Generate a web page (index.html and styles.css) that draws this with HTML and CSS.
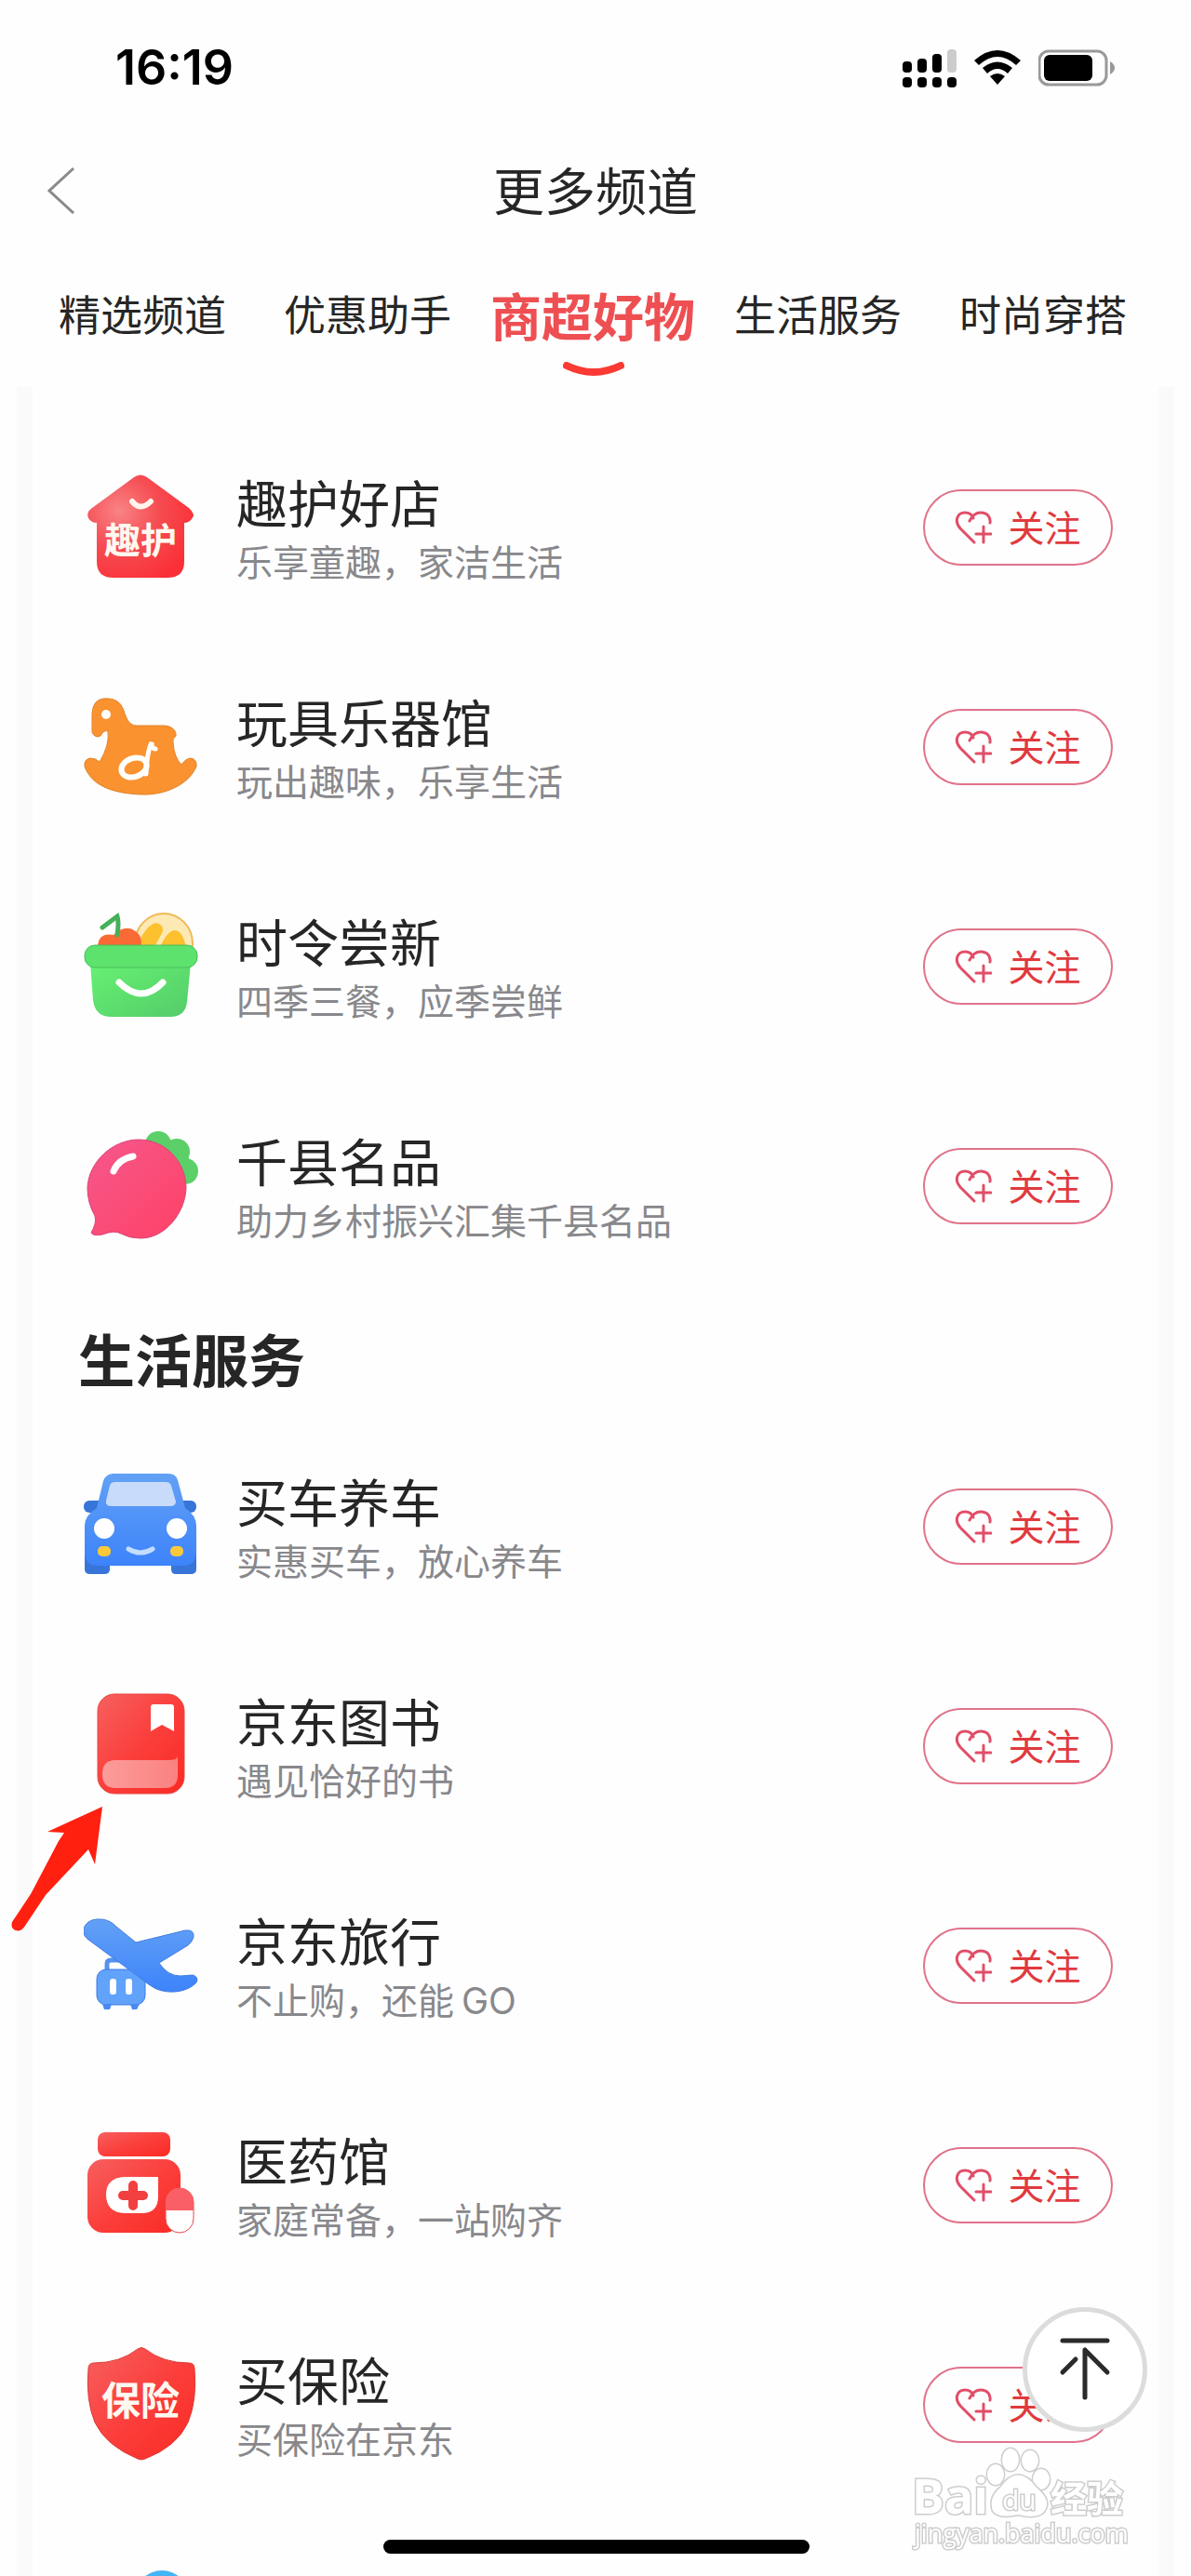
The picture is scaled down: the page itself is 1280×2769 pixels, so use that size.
FILE: index.html
```html
<!DOCTYPE html>
<html lang="zh-CN">
<head>
<meta charset="utf-8">
<meta name="viewport" content="width=device-width, initial-scale=1">
<title>更多频道</title>
<link rel="stylesheet" href="styles.css">
</head>
<body>
<svg class="defs" aria-hidden="true">
  <defs>
    <linearGradient id="red" x1="0" y1="0" x2="1" y2="1"><stop offset="0" stop-color="#f6605f"/><stop offset=".5" stop-color="#fb3f3c"/><stop offset="1" stop-color="#fa2a24"/></linearGradient>
    <radialGradient id="house" cx=".3" cy=".35" r=".75"><stop offset="0" stop-color="#f98385"/><stop offset=".5" stop-color="#f54c52"/><stop offset="1" stop-color="#fb3037"/></radialGradient>
    <linearGradient id="green" x1="0" y1="0" x2="1" y2="1"><stop offset="0" stop-color="#66f273"/><stop offset="1" stop-color="#54cb69"/></linearGradient>
    <linearGradient id="blue" x1="0" y1="0" x2="0" y2="1"><stop offset="0" stop-color="#62a1f5"/><stop offset="1" stop-color="#3d83fb"/></linearGradient>
    <linearGradient id="pink" x1="0" y1="0" x2="1" y2="1"><stop offset="0" stop-color="#f5588c"/><stop offset="1" stop-color="#ff4166"/></linearGradient>
    <linearGradient id="page" x1="0" y1="0" x2="1" y2="0"><stop offset="0" stop-color="#fc9c9a"/><stop offset="1" stop-color="#fa8280"/></linearGradient>
    <symbol id="follow" viewBox="0 0 40 38">
      <path d="M21 35 6 20C-1 12 3 3 11 3c5 0 8 3 9 6M16 12C19 6 24 3 28 3c7 0 11 5 10 11" />
      <path d="M31 18v17M23 26h16"/>
    </symbol>
  </defs>
</svg>

<div class="app">
  <header class="status">
    <span class="clock">16:19</span>
    <span class="indicators">
      <svg width="58" height="41" viewBox="0 0 58 41" aria-hidden="true"><rect x="0" y="13" width="10" height="12" rx="4"/><rect x="16" y="10" width="10" height="15" rx="4"/><rect x="32" y="5" width="10" height="20" rx="4"/><rect x="48" y="0" width="10" height="25" rx="4" fill="#ccc"/><rect x="0" y="30" width="10" height="11" rx="4"/><rect x="16" y="30" width="10" height="11" rx="4"/><rect x="32" y="30" width="10" height="11" rx="4"/><rect x="48" y="30" width="10" height="11" rx="4"/></svg>
      <svg width="50" height="38" viewBox="0 0 50 38" aria-hidden="true"><path d="M0 11Q25-11 50 11l-5 5Q25-2 5 16zM9 19Q25 6 41 19l-5 6Q25 15 14 25zM17 28Q25 22 33 28L25 37z"/></svg>
      <svg width="82" height="40" viewBox="0 0 82 40" aria-hidden="true"><rect x="1" y="2" width="72" height="36" rx="10" fill="none" stroke="#999" stroke-width="3"/><rect x="6" y="6" width="52" height="28" rx="6"/><path d="M77 13q5 3 5 7t-5 7z" fill="#999"/></svg>
    </span>
  </header>

  <div class="titlebar">
    <button class="back" aria-label="返回"><svg width="30" height="50" viewBox="0 0 30 50"><path d="M28 1 2 25 28 49" fill="none" stroke="#8a8a8a" stroke-width="3"/></svg></button>
    <h1>更多频道</h1>
  </div>

  <nav class="tabs">
    <a href="#jx">精选频道</a>
    <a href="#yh">优惠助手</a>
    <a href="#sc" class="active" aria-current="true">商超好物<svg class="smile" width="66" height="16" viewBox="0 0 66 16" aria-hidden="true"><path d="M4 4Q33 18 62 4" fill="none" stroke="#fb3a34" stroke-width="8" stroke-linecap="round"/></svg></a>
    <a href="#life">生活服务</a>
    <a href="#ss">时尚穿搭</a>
  </nav>

  <main class="panel">
    <ul class="rows" id="sc">
      <li class="row">
        <svg class="icon" viewBox="0 0 124 124" aria-hidden="true"><path d="M54 8q7-5 14 0L113 41q8 7 3 12-3 4-8 4v42q0 17-18 17H32q-18 0-18-17V57q-6 0-9-5-3-6 4-11z" fill="url(#house)"/><path d="M52 34q9 11 20 0" fill="none" stroke="#fff5ec" stroke-width="6" stroke-linecap="round"/><text x="61" y="90" class="badge" font-size="39">趣护</text></svg>
        <div class="text"><h3>趣护好店</h3><p>乐享童趣，家洁生活</p></div>
        <button class="follow"><svg><use href="#follow"/></svg><span>关注</span></button>
      </li>
      <li class="row">
        <svg class="icon" viewBox="0 0 124 124" aria-hidden="true"><path d="M21 10C34 9 40 14 43 23C46 32 49 39 57 39H86C94 39 100 44 99 50Q95 53 96 57Q97 73 105 81Q110 74 115 74Q122 75 121 83C113 102 88 114 62 113C34 112 9 105 1 83Q0 75 7 74Q13 74 17 78Q28 60 26 45Q22 43 18 50Q12 53 9 46V26Q10 11 21 10Z" fill="#fa922f" stroke="#e0842b"/><circle cx="24" cy="27" r="5" fill="#fff"/><ellipse cx="54" cy="84" rx="14" ry="10" fill="none" stroke="#fff" stroke-width="6" transform="rotate(-20 54 84)"/><path d="M67 91Q68 67 73 57q0 7 4 7" fill="none" stroke="#fff" stroke-width="5" stroke-linecap="round"/></svg>
        <div class="text"><h3>玩具乐器馆</h3><p>玩出趣味，乐享生活</p></div>
        <button class="follow"><svg><use href="#follow"/></svg><span>关注</span></button>
      </li>
      <li class="row">
        <svg class="icon" viewBox="0 0 124 124" aria-hidden="true"><ellipse cx="86" cy="37" rx="31" ry="32" fill="#fde9b4" stroke="#f0b955" stroke-width="2"/><path d="M58 41Q64 20 77 15q9 1 8 9-5 10-9 17zM82 41Q90 23 98 23q8 0 12 18z" fill="#fdc02f"/><path d="M15 42Q15 25 32 28 45 15 57 25q7 6 4 17z" fill="#fa6a35"/><path d="M36 28Q38 14 36 8L20 20" fill="none" stroke="#45b058" stroke-width="5" stroke-linecap="round"/><path d="M7 58h108l-4 42q-2 16-18 16H30q-18 0-20-18z" fill="url(#green)"/><rect x="1" y="39" width="121" height="24" rx="11" fill="#5de36d" stroke="#48bd5c"/><path d="M38 79q24 24 47 0" fill="none" stroke="#fff" stroke-width="7" stroke-linecap="round"/></svg>
        <div class="text"><h3>时令尝新</h3><p>四季三餐，应季尝鲜</p></div>
        <button class="follow"><svg><use href="#follow"/></svg><span>关注</span></button>
      </li>
      <li class="row">
        <svg class="icon" viewBox="0 0 124 124" aria-hidden="true"><g fill="#5bcf68"><circle cx="80" cy="17" r="14"/><circle cx="100" cy="25" r="14"/><circle cx="109" cy="46" r="14"/><circle cx="94" cy="38" r="20"/></g><path d="M59 12C88 12 110 36 110 64C109 91 87 119 60 118Q49 118 40 113Q33 109 20 114Q10 116 8 112Q14 102 12 94Q4 80 4 64C5 36 31 12 59 12Z" fill="url(#pink)" stroke="#d9447a"/><path d="M53 30Q37 33 32 46" fill="none" stroke="#fff" stroke-width="7" stroke-linecap="round"/></svg>
        <div class="text"><h3>千县名品</h3><p>助力乡村振兴汇集千县名品</p></div>
        <button class="follow"><svg><use href="#follow"/></svg><span>关注</span></button>
      </li>
    </ul>

    <h2 id="life">生活服务</h2>

    <ul class="rows">
      <li class="row">
        <svg class="icon" viewBox="0 0 124 124" aria-hidden="true"><g fill="#3875d8"><rect x="0" y="34" width="24" height="13" rx="6"/><rect x="97" y="34" width="24" height="13" rx="6"/><path d="M1 70H28V108q0 5-6 5H7q-6 0-6-5zM94 70h27v38q0 5-6 5H99q-5 0-5-5z"/></g><path d="M32 5H91q8 0 10 7l8 30q12 8 12 19v31q-2 12-14 12H15Q3 104 1 92V61q0-11 13-19L21 13q3-8 11-8z" fill="url(#blue)"/><path d="M34 14H88q5 0 6 4l5 17q0 5-6 5H30q-7 0-6-6l4-16q1-4 6-4z" fill="#c8dbfb"/><circle cx="22" cy="64" r="11" fill="#fff"/><circle cx="100" cy="64" r="11" fill="#fff"/><rect x="15" y="83" width="14" height="11" rx="5" fill="#fac93b"/><rect x="93" y="83" width="14" height="11" rx="5" fill="#fac93b"/><path d="M48 86q13 8 26 0" fill="none" stroke="#c3ddff" stroke-width="5" stroke-linecap="round"/></svg>
        <div class="text"><h3>买车养车</h3><p>实惠买车，放心养车</p></div>
        <button class="follow"><svg><use href="#follow"/></svg><span>关注</span></button>
      </li>
      <li class="row">
        <svg class="icon" viewBox="0 0 124 124" aria-hidden="true"><rect x="15" y="6" width="93" height="107" rx="18" fill="url(#red)" stroke="#e64843"/><path d="M72 20q0-3 3-3h19q3 0 3 3v26L84 39 72 46z" fill="#fff"/><path d="M34 77H91q9 0 10-4V93q0 14-14 14H34Q20 107 20 92q0-15 14-15z" fill="url(#page)"/></svg>
        <div class="text"><h3>京东图书</h3><p>遇见恰好的书</p></div>
        <button class="follow"><svg><use href="#follow"/></svg><span>关注</span></button>
        <svg class="pointer" width="100" height="136" viewBox="0 0 100 136" aria-hidden="true"><path d="M99 1 40 28l18 1-6 9L22 95 2 125q-2 7 4 9 6 2 10-5L38 96 84 47l7 16z" fill="#ff2010"/></svg>
      </li>
      <li class="row">
        <svg class="icon" viewBox="0 0 124 124" aria-hidden="true"><path d="M25 69V60q0-4 4-4H46q4 0 4 4v9" fill="none" stroke="#5592ef" stroke-width="5"/><rect x="14" y="66" width="52" height="38" rx="10" fill="#61a2fa" stroke="#3f7de0"/><path d="M20 103h10l-2 6h-6zM50 103h10l-3 6h-5z" fill="#4a8af0"/><rect x="28" y="76" width="7" height="17" rx="3" fill="#fff"/><rect x="45" y="76" width="7" height="17" rx="3" fill="#fff"/><path d="M14 12Q27 11 35 20L56 37L109 24Q119 23 118 31Q117 36 112 40L81 59Q90 73 104 73L117 72Q124 74 121 80C111 91 90 93 76 86Q69 82 62 76L5 34Q-1 30 0 22Q3 13 14 12Z" fill="url(#blue)" stroke="#417ee0"/></svg>
        <div class="text"><h3>京东旅行</h3><p>不止购，还能<span class="latin">GO</span></p></div>
        <button class="follow"><svg><use href="#follow"/></svg><span>关注</span></button>
      </li>
      <li class="row">
        <svg class="icon" viewBox="0 0 124 124" aria-hidden="true"><rect x="15" y="5" width="78" height="26" rx="8" fill="url(#red)"/><rect x="4" y="34" width="100" height="79" rx="17" fill="url(#red)"/><path d="M44 53H80V74q0 18-18 18H44Q24 91 24 72 24 54 44 53z" fill="#fff"/><path d="M53 62V84M42 73H64" stroke="#f23f40" stroke-width="10" stroke-linecap="round"/><rect x="88" y="65" width="30" height="48" rx="15" fill="#fff" stroke="#e8464b"/><path d="M88 89V80a15 15 0 0 1 30 0v9z" fill="#fa5f65"/></svg>
        <div class="text"><h3>医药馆</h3><p>家庭常备，一站购齐</p></div>
        <button class="follow"><svg><use href="#follow"/></svg><span>关注</span></button>
      </li>
      <li class="row">
        <svg class="icon" viewBox="0 0 124 124" aria-hidden="true"><path d="M58 2q4-3 8 0Q85 17 113 17q6 0 6 6 3 34-7 58Q100 107 66 120q-4 2-8 0Q24 106 12 81 2 57 5 23q0-6 6-6 28 0 47-15z" fill="url(#red)" stroke="#dc3a36"/><text x="61" y="73" class="badge" font-size="42">保险</text></svg>
        <div class="text"><h3>买保险</h3><p>买保险在京东</p></div>
        <button class="follow"><svg><use href="#follow"/></svg><span>关注</span></button>
      </li>
      <li class="row">
        <svg class="icon" viewBox="0 0 124 124" aria-hidden="true"><circle cx="84" cy="33" r="29" fill="#43b4f5"/></svg>
      </li>
    </ul>
  </main>
</div>

<button class="to-top" aria-label="回到顶部"><svg width="56" height="68" viewBox="0 0 56 68"><path d="M4 3H52M28 13V64M28 13 52 37M4 37 18 23" fill="none" stroke="#2b2b2b" stroke-width="5" stroke-linecap="round"/></svg></button>

<svg class="watermark" width="240" height="120" viewBox="0 0 240 120" role="img" aria-label="Baidu经验 jingyan.baidu.com">
  <g class="outline">
    <text x="6" y="77" font-size="52" font-weight="700">Bai</text>
    <g><ellipse cx="96" cy="35" rx="9" ry="11"/><ellipse cx="112" cy="19" rx="9" ry="12"/><ellipse cx="133" cy="20" rx="9" ry="11"/><ellipse cx="145" cy="40" rx="9" ry="11"/><path d="M101 49Q120 22 140 49 157 63 148 75 141 83 120 78 100 83 93 74 88 60 101 49Z"/></g>
    <text x="103" y="73" font-size="30">du</text>
    <text x="155" y="75" font-size="39" font-weight="700">经验</text>
    <text x="9" y="108" font-size="27">jingyan.baidu.com</text>
  </g>
</svg>
<div class="home-bar"></div>
</body>
</html>
```
FILE: styles.css
```css
* { box-sizing: border-box; }

body {
  margin: 0;
  background: #fefefe;
  color: #262626;
  font-family: "Noto Sans CJK SC", sans-serif;
}

h1, h2, h3, p, ul { margin: 0; padding: 0; font-weight: 400; }
ul { list-style: none; }
button { font: inherit; padding: 0; border: 0; background: none; cursor: pointer; }
a { color: inherit; text-decoration: none; }
svg { display: block; flex: none; }
.defs { position: absolute; width: 0; height: 0; }

.app {
  display: flex;
  flex-direction: column;
  height: 100vh;
  overflow: hidden;
}

.status {
  display: flex;
  flex: none;
  align-items: center;
  justify-content: space-between;
  height: 146px;
  padding: 0 82px 0 124px;
}
.clock {
  font: 600 52px/60px Inter, sans-serif;
  color: #000;
}
.indicators { display: flex; align-items: center; gap: 19px; }

.titlebar {
  display: grid;
  flex: none;
  grid-template-columns: 80px 1fr 80px;
  align-items: center;
  height: 118px;
}
.back { padding-left: 51px; }
.titlebar h1 {
  padding-bottom: 6px;
  font-size: 55px;
  line-height: 80px;
  text-align: center;
}

.tabs {
  display: grid;
  flex: none;
  grid-template-columns: repeat(5, 1fr);
  height: 152px;
  padding: 0 38px 0 32px;
}
.tabs a {
  position: relative;
  font-size: 45px;
  line-height: 146px;
  text-align: center;
  white-space: nowrap;
}
.tabs .active { font-size: 55px; font-weight: 700; color: #ee4f52; }
.smile { position: absolute; left: 50%; top: 125px; margin-left: -32px; }

.panel {
  flex: 1;
  min-height: 0;
  margin: 0 18px;
  padding-top: 33px;
  border: solid #fafafa;
  border-width: 0 17px;
}
.panel h2 {
  padding: 22px 49px 18px;
  font-size: 61px;
  font-weight: 700;
  line-height: 90px;
}

.row {
  position: relative;
  display: flex;
  align-items: center;
  gap: 40px;
  height: 236px;
  padding: 0 49px 0 55px;
}
.icon { width: 124px; height: 124px; }
.badge { fill: #fff8f0; font-weight: 700; text-anchor: middle; }
.text { flex: 1; min-width: 0; white-space: nowrap; }
.text h3 { font-size: 55px; line-height: 70px; }
.text p { font-size: 39px; line-height: 58px; color: #88888c; }
.latin { margin-left: 8px; font-family: Inter, sans-serif; line-height: 1; }

.follow {
  display: flex;
  align-items: center;
  justify-content: center;
  gap: 17px;
  width: 204px;
  height: 82px;
  border: 2px solid #e0738a;
  border-radius: 41px;
  color: #e03a3e;
  font-size: 39px;
  line-height: 58px;
}
.follow span { padding-bottom: 4px; }
.follow svg {
  width: 40px;
  height: 38px;
  fill: none;
  stroke: #e14e68;
  stroke-width: 3px;
  stroke-linecap: round;
}

.pointer { position: absolute; left: -24px; top: 182px; }

.to-top {
  position: fixed;
  right: 47px;
  bottom: 155px;
  display: grid;
  place-items: center;
  width: 134px;
  height: 134px;
  border: 5px solid #dcdcdc;
  border-radius: 50%;
  background: #fff;
}

.watermark { position: fixed; right: 66px; bottom: 24px; overflow: visible; }
.outline {
  fill: #fff;
  stroke: #cdcdcd;
  stroke-width: 3px;
  paint-order: stroke;
  font-family: "Open Sans", "Noto Sans CJK SC", sans-serif;
}

.home-bar {
  position: fixed;
  left: 50%;
  bottom: 24px;
  width: 458px;
  height: 15px;
  margin-left: -228px;
  border-radius: 8px;
  background: #000;
}
```
